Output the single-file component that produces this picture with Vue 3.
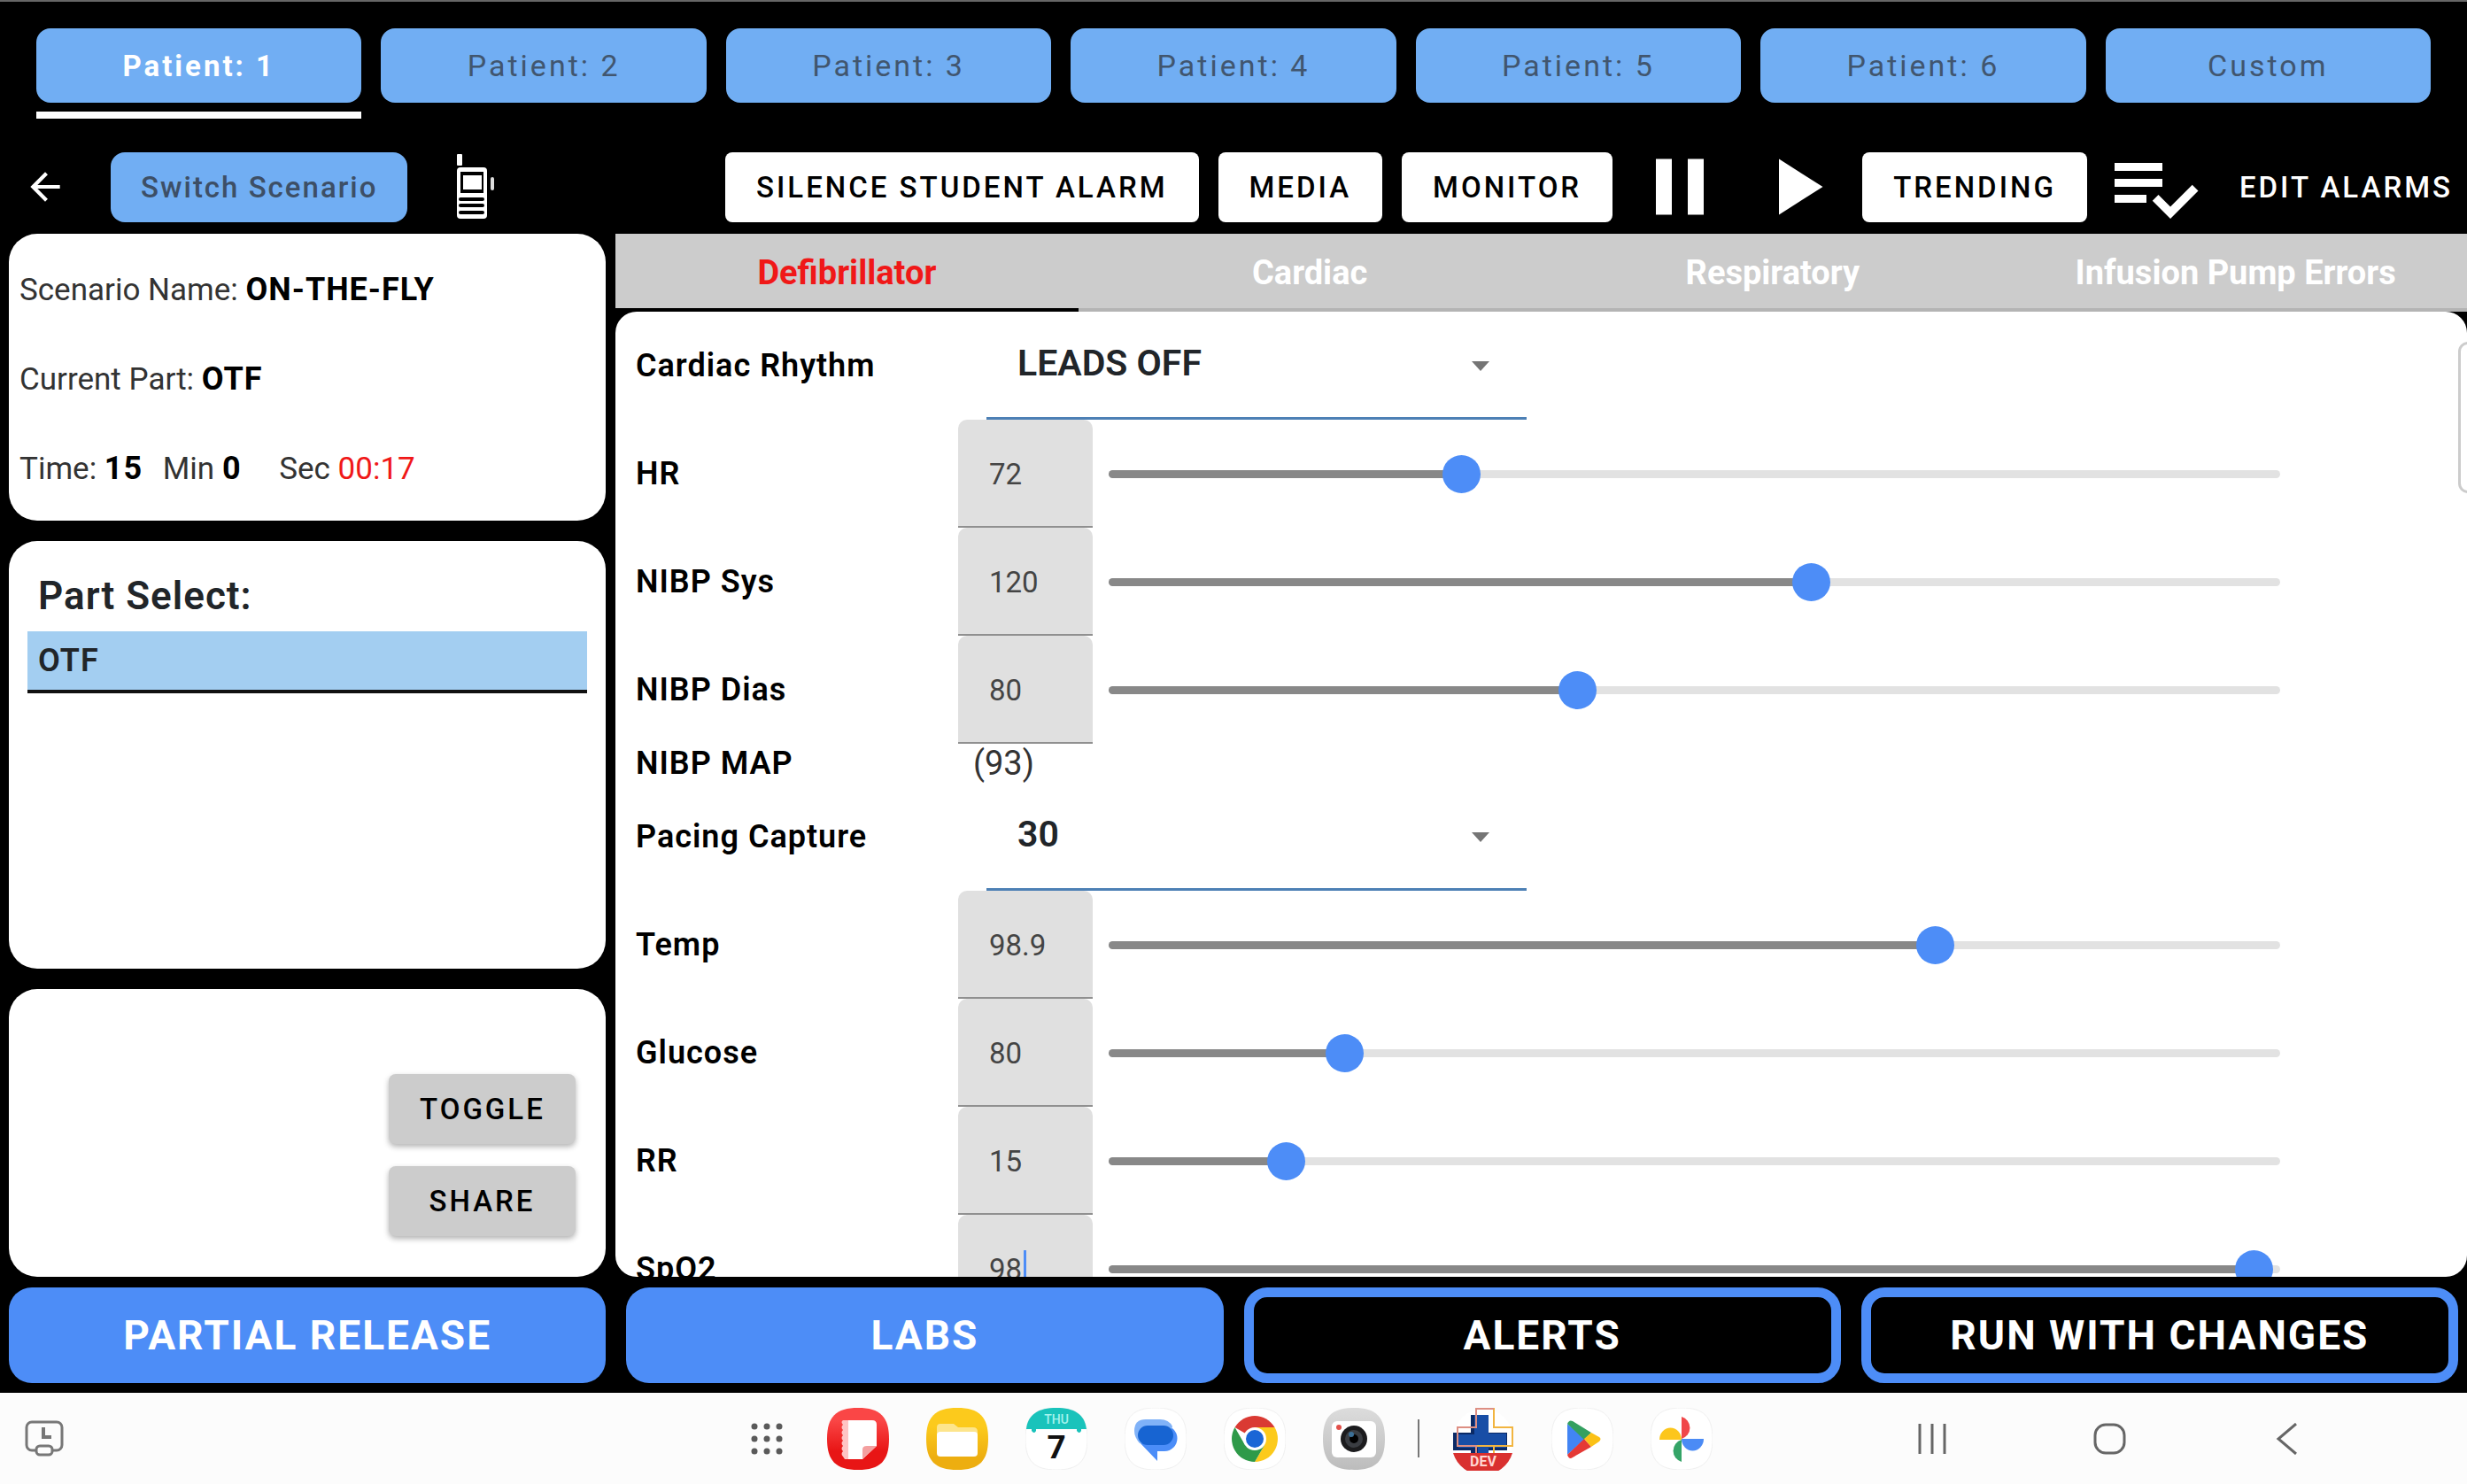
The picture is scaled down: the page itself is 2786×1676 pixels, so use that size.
<script setup>
import { ref, reactive } from 'vue';

const patients = ['Patient: 1', 'Patient: 2', 'Patient: 3', 'Patient: 4', 'Patient: 5', 'Patient: 6', 'Custom'];
const activePatient = ref('Patient: 1');

const sections = ['Defibrillator', 'Cardiac', 'Respiratory', 'Infusion Pump Errors'];
const activeSection = ref('Defibrillator');

const parts = ['OTF'];
const activePart = ref('OTF');

const vitals = reactive([
  { id: 'rhythm', label: 'Cardiac Rhythm', type: 'select', value: 'LEADS OFF', options: ['LEADS OFF', 'SINUS'] },
  { id: 'hr', label: 'HR', type: 'range', value: 72, min: 0, max: 240, step: 1 },
  { id: 'sys', label: 'NIBP Sys', type: 'range', value: 120, min: 0, max: 200, step: 1 },
  { id: 'dias', label: 'NIBP Dias', type: 'range', value: 80, min: 0, max: 200, step: 1 },
  { id: 'map', label: 'NIBP MAP', type: 'text', value: '(93)' },
  { id: 'pacing', label: 'Pacing Capture', type: 'select', value: '30', options: ['30', '40', '50'] },
  { id: 'temp', label: 'Temp', type: 'range', value: 98.9, min: 77, max: 108, step: 0.1 },
  { id: 'glucose', label: 'Glucose', type: 'range', value: 80, min: 0, max: 400, step: 1 },
  { id: 'rr', label: 'RR', type: 'range', value: 15, min: 0, max: 100, step: 1 },
  { id: 'spo2', label: 'SpO2', type: 'range', value: 98, min: 0, max: 100, step: 1, editing: true }
]);

const fill = (v) => ((v.value - v.min) / (v.max - v.min)) * 100 + '%';
</script>

<template>
  <div class="screen">
    <nav class="patients">
      <div v-for="p in patients" :key="p" class="patient" :class="{ active: p === activePatient }">
        <button class="blue-btn" @click="activePatient = p">{{ p }}</button>
        <span class="patient-line"></span>
      </div>
    </nav>

    <header class="toolbar">
      <button class="icon-btn back" aria-label="Back">
        <svg width="50" height="50" viewBox="0 0 24 24" fill="#fff"><path d="M20 11H7.83l5.59-5.59L12 4l-8 8 8 8 1.41-1.41L7.83 13H20v-2z" /></svg>
      </button>
      <button class="blue-btn switch">Switch Scenario</button>
      <button class="icon-btn radio" aria-label="Radio">
        <svg width="44" height="76" viewBox="0 0 44 76">
          <rect x="1" y="1" width="6" height="13" rx="1" fill="#fff" />
          <rect x="1" y="16" width="34" height="58" rx="4" fill="#fff" />
          <rect x="5" y="21" width="26" height="24" fill="#000" />
          <rect x="8" y="25" width="21" height="16" fill="#fff" />
          <path d="M5 52h25M5 59h25M5 67h25" stroke="#000" stroke-width="4" stroke-linecap="round" />
          <rect x="39" y="27" width="4" height="15" rx="2" fill="#ddd" />
        </svg>
      </button>
      <div class="actions">
        <button class="white-btn">SILENCE STUDENT ALARM</button>
        <button class="white-btn">MEDIA</button>
        <button class="white-btn">MONITOR</button>
        <button class="icon-btn" aria-label="Pause">
          <svg width="108" height="108" viewBox="0 0 24 24" fill="#fff"><path d="M6 19h4V5H6v14zm8-14v14h4V5h-4z" /></svg>
        </button>
        <button class="icon-btn" aria-label="Play">
          <svg width="108" height="108" viewBox="0 0 24 24" fill="#fff"><path d="M8 5v14l11-7z" /></svg>
        </button>
        <button class="white-btn">TRENDING</button>
        <button class="icon-btn" aria-label="Alarm list">
          <svg width="108" height="108" viewBox="0 0 24 24" fill="#fff"><path d="M14 10H2v2h12v-2zm0-4H2v2h12V6zM2 16h8v-2H2v2zm19.500-4.500L23 13l-6.990 7-4.510-4.500L13 14l3.010 3 5.490-5.500z" /></svg>
        </button>
        <button class="text-btn">EDIT ALARMS</button>
      </div>
    </header>

    <main class="main">
      <aside class="side">
        <section class="card info">
          <p>Scenario Name: <b>ON-THE-FLY</b></p>
          <p>Current Part: <b>OTF</b></p>
          <p>Time: <b class="minutes">15</b> Min <b class="seconds">0</b> Sec <span class="elapsed">00:17</span></p>
        </section>

        <section class="card parts">
          <h2>Part Select:</h2>
          <button v-for="part in parts" :key="part" class="part" :class="{ active: part === activePart }" @click="activePart = part">{{ part }}</button>
        </section>

        <section class="card tools">
          <button class="grey-btn">TOGGLE</button>
          <button class="grey-btn">SHARE</button>
        </section>
      </aside>

      <section class="content">
        <nav class="sections">
          <button v-for="s in sections" :key="s" :class="{ active: s === activeSection }" @click="activeSection = s">{{ s }}</button>
        </nav>

        <div class="sheet">
          <div v-for="v in vitals" :key="v.id" class="row" :class="'row-' + v.type">
            <label :for="v.id">{{ v.label }}</label>

            <div v-if="v.type === 'select'" class="picker">
              <select :id="v.id" v-model="v.value">
                <option v-for="o in v.options" :key="o">{{ o }}</option>
              </select>
              <svg width="20" height="11" viewBox="0 0 20 11"><path d="M0 0h20L10 11z" fill="#757575" /></svg>
            </div>

            <output v-else-if="v.type === 'text'" :id="v.id">{{ v.value }}</output>

            <template v-else>
              <div class="field">
                <input :id="v.id" v-model="v.value" type="text" inputmode="decimal" />
                <span v-if="v.editing" class="caret"></span>
              </div>
              <div class="slider">
                <div class="track"><div class="track-fill" :style="{ width: fill(v) }"></div></div>
                <input v-model.number="v.value" type="range" :min="v.min" :max="v.max" :step="v.step" :aria-label="v.label" />
              </div>
            </template>
          </div>
          <div class="handle"></div>
        </div>
      </section>
    </main>

    <footer class="bottom">
      <button class="big-btn">PARTIAL RELEASE</button>
      <button class="big-btn">LABS</button>
      <button class="big-btn outline">ALERTS</button>
      <button class="big-btn outline">RUN WITH CHANGES</button>
    </footer>

    <div class="taskbar">
      <button class="icon-btn recent" aria-label="Recent screen">
        <svg width="44" height="42" viewBox="0 0 44 42" fill="none" stroke="#777" stroke-width="3">
          <path d="M12 34H8a6 6 0 0 1-6-6V8a6 6 0 0 1 6-6h28a6 6 0 0 1 6 6v20a6 6 0 0 1-6 6h-4" />
          <rect x="13" y="29" width="18" height="10" rx="4" />
          <path d="M21 8v11h9" stroke-width="4" />
        </svg>
      </button>

      <div class="apps">
        <button class="icon-btn drawer" aria-label="All apps">
          <svg width="36" height="36" viewBox="0 0 36 36" fill="#5a5a5a">
            <circle cx="4" cy="4" r="3.500" /><circle cx="18" cy="4" r="3.500" /><circle cx="32" cy="4" r="3.500" />
            <circle cx="4" cy="18" r="3.500" /><circle cx="18" cy="18" r="3.500" /><circle cx="32" cy="18" r="3.500" />
            <circle cx="4" cy="32" r="3.500" /><circle cx="18" cy="32" r="3.500" /><circle cx="32" cy="32" r="3.500" />
          </svg>
        </button>
        <div class="app-group">
          <button class="icon-btn" aria-label="Notes">
            <svg width="70" height="70" viewBox="0 0 70 70">
              <defs><linearGradient id="notes" x2="0" y2="1"><stop offset="0.2" stop-color="#fa4646" /><stop offset="0.7" stop-color="#e81515" /></linearGradient></defs>
              <path d="M35 0C60 0 70 10 70 35S60 70 35 70 0 60 0 35 10 0 35 0z" fill="url(#notes)" />
              <path d="M24 14h-6q-3 2 0 5-3 3 0 6-3 3 0 6-3 3 0 6-3 3 0 6-3 3 0 6-3 3 0 6l2 3h4z" fill="#ffc4c4" />
              <path d="M24 14h27q5 0 5 5v24L40 58H24z" fill="#fff" />
              <path d="M56 43L40 58V47q0-4 5-4z" fill="#f4a0a0" />
            </svg>
          </button>
          <button class="icon-btn" aria-label="My Files">
            <svg width="70" height="70" viewBox="0 0 70 70">
              <defs><linearGradient id="files" x2="0" y2="1"><stop offset="0.3" stop-color="#fcca1c" /><stop offset="0.8" stop-color="#edae10" /></linearGradient></defs>
              <path d="M35 0C60 0 70 10 70 35S60 70 35 70 0 60 0 35 10 0 35 0z" fill="url(#files)" />
              <path d="M12 22q0-4 4-4h15l5 4h17q5 0 5 5v10H12z" fill="#fde58c" />
              <rect x="12" y="27" width="46" height="28" rx="4" fill="#fff" />
            </svg>
          </button>
          <button class="icon-btn" aria-label="Calendar">
            <svg width="70" height="70" viewBox="0 0 70 70">
              <path d="M35 0C60 0 70 10 70 35S60 70 35 70 0 60 0 35 10 0 35 0z" fill="#fff" stroke="#f0f0f0" />
              <path d="M35 0C55 0 67 7 69 24h-6v2q-2 4-5 0v-2H12v2q-2 4-5 0v-2H1C3 7 15 0 35 0z" fill="#19c3bb" />
              <text x="35" y="18" text-anchor="middle" font-size="14" font-weight="500" fill="#a5f3ee">THU</text>
              <text x="35" y="57" text-anchor="middle" font-size="37" font-weight="700" fill="#111">7</text>
            </svg>
          </button>
          <button class="icon-btn" aria-label="Messages">
            <svg width="70" height="70" viewBox="0 0 70 70">
              <path d="M35 0C60 0 70 10 70 35S60 70 35 70 0 60 0 35 10 0 35 0z" fill="#fff" stroke="#f0f0f0" />
              <path d="M26 20h19a14 14 0 0 1 0 29h-8v11L15 37z" fill="#4b8df8" />
              <path d="M24 13h16q10 0 14 8-4 14-28 19l-9 0q-6-7-6-14 0-13 13-13z" fill="#80b2f8" />
              <rect x="15" y="20" width="40" height="22" rx="11" fill="#1764d2" />
            </svg>
          </button>
          <button class="icon-btn" aria-label="Chrome">
            <svg width="70" height="70" viewBox="0 0 70 70">
              <path d="M35 0C60 0 70 10 70 35S60 70 35 70 0 60 0 35 10 0 35 0z" fill="#fff" stroke="#f0f0f0" />
              <path d="M35 35L12.500 22A26 26 0 0 1 57.500 22z" fill="#da3a33" />
              <path d="M35 35V22H57.500A26 26 0 0 1 35 61L46 42z" fill="#fcca1c" />
              <path d="M35 61A26 26 0 0 1 12.500 22L24 42 35 47 46 42z" fill="#2e9a49" />
              <circle cx="35" cy="35" r="13" fill="#fff" />
              <circle cx="35" cy="35" r="10" fill="#1a66d6" />
            </svg>
          </button>
          <button class="icon-btn" aria-label="Camera">
            <svg width="70" height="70" viewBox="0 0 70 70">
              <defs><linearGradient id="camera" x2="0" y2="1"><stop offset="0" stop-color="#dcdcdc" /><stop offset="1" stop-color="#bcbcbc" /></linearGradient></defs>
              <path d="M35 0C60 0 70 10 70 35S60 70 35 70 0 60 0 35 10 0 35 0z" fill="url(#camera)" />
              <rect x="10" y="15" width="50" height="41" rx="6" fill="#fff" />
              <circle cx="18" cy="22" r="3" fill="#e2504a" />
              <circle cx="35" cy="35" r="15" fill="#1c1c1e" />
              <circle cx="35" cy="35" r="10" fill="#3a3d42" />
              <circle cx="35" cy="35" r="5" fill="#000" />
              <circle cx="32" cy="30" r="3" fill="#3b6f96" />
            </svg>
          </button>
        </div>
        <span class="divider"></span>
        <div class="app-group">
          <button class="icon-btn" aria-label="Simulator dev">
            <svg width="70" height="72" viewBox="0 0 70 72">
              <circle cx="35" cy="36" r="34" fill="#fff" />
              <path d="M21 9h20v20h21v20H41v4H21v-4H1V29h20z" fill="#0b2a66" />
              <path d="M25 9h16v21h20v16H41v7H29v-7H7V31h18z" fill="#184ea6" />
              <path d="M27 2h20v21h21v21H47v8M27 2v21H6v21h21v8M27 44h41" fill="none" stroke="#f2b540" stroke-width="2" />
              <path d="M27 52V44H6V23h21V2h20" fill="none" stroke="#dd8f83" stroke-width="2" />
              <path d="M1 52h67a35 35 0 0 1-67 0z" fill="#d9302f" />
              <text x="35" y="67" text-anchor="middle" font-size="16" font-weight="700" fill="#ffd6d2">DEV</text>
            </svg>
          </button>
          <button class="icon-btn" aria-label="Play Store">
            <svg width="70" height="70" viewBox="0 0 70 70">
              <path d="M35 0C60 0 70 10 70 35S60 70 35 70 0 60 0 35 10 0 35 0z" fill="#fff" stroke="#f0f0f0" />
              <path d="M18 18v35l20-18z" fill="#4285f4" />
              <path d="M18 18q2-5 6-3l21 13-8 8z" fill="#34a060" />
              <path d="M18 53q2 6 6 3l21-12-8-9z" fill="#e53935" />
              <path d="M45 28l9 5q3 2 0 5l-9 6-8-9z" fill="#fbc116" />
            </svg>
          </button>
          <button class="icon-btn" aria-label="Photos">
            <svg width="70" height="70" viewBox="0 0 70 70">
              <path d="M35 0C60 0 70 10 70 35S60 70 35 70 0 60 0 35 10 0 35 0z" fill="#fff" stroke="#f0f0f0" />
              <path d="M35 10a13 13 0 0 1 0 25z" fill="#f0474a" />
              <path d="M10 36a12 13 0 0 1 25 0z" fill="#fcc61c" />
              <path d="M35 36v25a13 13 0 0 1 0-25z" fill="#34a467" />
              <path d="M35 35h25a12 13 0 0 1-25 0z" fill="#4b8bf5" />
            </svg>
          </button>
        </div>
      </div>

      <div class="system">
        <button class="icon-btn" aria-label="Recents">
          <svg width="44" height="36" viewBox="0 0 44 36" stroke="#666" stroke-width="3"><path d="M8 1v34M22 1v34M36 1v34" /></svg>
        </button>
        <button class="icon-btn" aria-label="Home">
          <svg width="44" height="36" viewBox="0 0 44 36" fill="none" stroke="#666" stroke-width="3"><rect x="6" y="2" width="33" height="32" rx="12" /></svg>
        </button>
        <button class="icon-btn" aria-label="Back">
          <svg width="44" height="36" viewBox="0 0 44 36" fill="none" stroke="#666" stroke-width="3"><path d="M33 1L13 18l20 17" /></svg>
        </button>
      </div>
    </div>
  </div>
</template>

<style>
body {
  background: #000;
}
</style>

<style scoped>
.screen,
.screen * {
  box-sizing: border-box;
}

.screen {
  display: flex;
  flex-direction: column;
  height: 100vh;
  background: #000;
  border-top: 2px solid #666;
  font-family: Roboto, "Liberation Sans", sans-serif;
  color: #000;
}

button,
input,
select {
  margin: 0;
  padding: 0;
  border: 0;
  background: none;
  color: inherit;
  font: inherit;
}

svg {
  display: block;
}

.icon-btn {
  flex: none;
}

/* patient tabs */
.patients {
  display: flex;
  gap: 22px;
  padding: 30px 41px 0;
}

.patient {
  flex: 1;
  display: flex;
  flex-direction: column;
  gap: 10px;
}

.blue-btn {
  height: 84px;
  border-radius: 16px;
  background: #71aef3;
  color: #41566f;
  font-size: 34px;
  letter-spacing: 3px;
}

.patient-line {
  height: 8px;
}

.patient.active .blue-btn {
  color: #fff;
  font-size: 33px;
  font-weight: 700;
}

.patient.active .patient-line {
  background: #fff;
}

/* toolbar */
.toolbar {
  display: flex;
  align-items: center;
  height: 130px;
  padding: 24px 0 0 26px;
}

.switch {
  height: 79px;
  margin: 0 55px 0 49px;
  padding: 0 34px;
  color: #3d4f66;
  font-size: 33px;
  font-weight: 500;
  letter-spacing: 2px;
}

.actions {
  display: flex;
  align-items: center;
  gap: 22px;
  margin-left: auto;
}

.white-btn,
.grey-btn,
.text-btn {
  height: 79px;
  padding: 0 35px;
  border-radius: 8px;
  font-size: 33px;
  font-weight: 500;
  letter-spacing: 3px;
  white-space: nowrap;
}

.white-btn {
  background: #fff;
}

.text-btn {
  padding: 0 16px 0 20px;
  color: #fff;
}

/* main area */
.main {
  flex: 1;
  min-height: 0;
  display: grid;
  grid-template-columns: 674px 1fr;
  gap: 11px;
  padding-left: 10px;
}

.side {
  display: grid;
  grid-template-rows: 324px 1fr 325px;
  gap: 23px;
  min-height: 0;
}

.card {
  border-radius: 32px;
  background: #fff;
}

.info {
  padding: 13px 12px 0;
  font-size: 35px;
  line-height: 100px;
  color: #333;
}

.info p {
  margin: 0;
}

.info b {
  color: #000;
  font-size: 36px;
  letter-spacing: 1px;
}

.minutes {
  margin-right: 14px;
}

.seconds {
  margin-right: 34px;
}

.elapsed {
  color: #f01818;
}

.parts {
  padding: 32px 21px 0;
  color: #212529;
}

.parts h2 {
  margin: 0 0 10px;
  padding-left: 12px;
  font-size: 44px;
  font-weight: 600;
  letter-spacing: 1px;
  line-height: 60px;
}

.part {
  display: block;
  width: 100%;
  height: 70px;
  padding-left: 12px;
  border-bottom: 4px solid #111;
  font-size: 36px;
  font-weight: 600;
  letter-spacing: 1px;
  text-align: left;
}

.part.active {
  background: #a3cef1;
}

.tools {
  display: flex;
  flex-direction: column;
  align-items: flex-end;
  justify-content: flex-end;
  gap: 25px;
  padding: 0 34px 46px;
}

.grey-btn {
  width: 211px;
  background: #ccc;
  box-shadow: 0 3px 6px rgba(0, 0, 0, 0.3);
}

.content {
  display: flex;
  flex-direction: column;
  min-width: 0;
  min-height: 0;
}

.sections {
  display: flex;
  background: #ccc;
}

.sections button {
  flex: 1;
  height: 88px;
  padding-top: 3px;
  border-bottom: 4px solid #b4b4b4;
  color: #fff;
  font-size: 38px;
  font-weight: 700;
}

.sections button.active {
  border-color: #000;
  color: #f01818;
}

.sheet {
  position: relative;
  flex: 1;
  min-height: 0;
  overflow: hidden;
  border-radius: 24px;
  background: #fff;
}

.row {
  display: grid;
  grid-template-columns: 364px 152px 1fr;
  align-items: center;
  height: 122px;
  padding: 0 193px 0 23px;
}

.row-text {
  height: 44px;
}

.row-select {
  grid-template-columns: 364px 1fr;
}

.row label {
  font-size: 36px;
  font-weight: 600;
  letter-spacing: 1px;
}

.row output {
  padding-left: 17px;
  font-size: 38px;
  color: #333;
}

.picker {
  display: grid;
  grid-template-columns: 1fr 20px 42px;
  align-items: center;
  width: 610px;
  height: 122px;
  margin-left: 32px;
}

.picker select {
  grid-area: 1 / 1 / 2 / 4;
  height: 100%;
  padding: 0 35px 3px;
  border-bottom: 3px solid #4d80b5;
  appearance: none;
  font-size: 41px;
  font-weight: 600;
  color: #212529;
}

.picker svg {
  grid-area: 1 / 2 / 2 / 3;
  pointer-events: none;
}

.field {
  position: relative;
  height: 122px;
}

.field input {
  width: 100%;
  height: 100%;
  padding: 2px 35px 0;
  border-bottom: 2px solid #909090;
  border-radius: 10px 10px 0 0;
  background: #e0e0e0;
  font-size: 33px;
  color: #444;
}

.caret {
  position: absolute;
  top: 40px;
  left: 74px;
  width: 3px;
  height: 44px;
  background: #4d8df7;
}

.slider {
  display: grid;
  align-items: center;
}

.track {
  grid-area: 1 / 1;
  height: 9px;
  margin: 0 18px;
  border-radius: 5px;
  overflow: hidden;
  background: #e2e2e2;
}

.track-fill {
  height: 100%;
  background: #888;
}

.slider input {
  grid-area: 1 / 1;
  width: 100%;
  height: 44px;
  appearance: none;
}

.slider input::-webkit-slider-thumb {
  appearance: none;
  width: 43px;
  height: 43px;
  border-radius: 50%;
  background: #4d8df7;
}

.handle {
  position: absolute;
  top: 34px;
  right: -12px;
  width: 22px;
  height: 171px;
  border: 3px solid #ccc;
  border-radius: 12px;
}

/* bottom actions */
.bottom {
  display: grid;
  grid-template-columns: repeat(4, 1fr);
  gap: 23px;
  padding: 12px 10px 11px;
}

.big-btn {
  height: 108px;
  border-radius: 26px;
  background: #4d8df7;
  color: #fff;
  font-size: 46px;
  font-weight: 700;
  letter-spacing: 2px;
}

.big-btn.outline {
  border: 11px solid #4d8df7;
  background: #000;
}

/* system taskbar */
.taskbar {
  display: grid;
  grid-template-columns: 1fr auto 1fr;
  align-items: center;
  height: 103px;
  background: #fcfcfc;
}

.recent {
  justify-self: start;
  margin-left: 28px;
}

.apps {
  display: flex;
  align-items: center;
  gap: 37px;
  padding-right: 4px;
}

.drawer {
  margin-right: 13px;
}

.app-group {
  display: flex;
  align-items: center;
  gap: 42px;
}

.divider {
  width: 2px;
  height: 43px;
  background: #777;
}

.system {
  display: flex;
  justify-content: flex-end;
  gap: 156px;
  padding-right: 182px;
}
</style>
